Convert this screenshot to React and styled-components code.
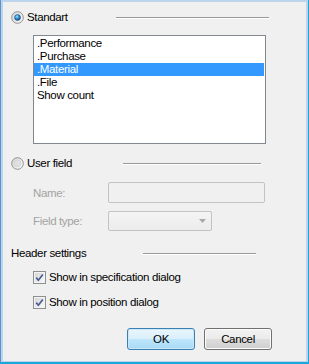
import styled, { createGlobalStyle } from "styled-components";

const Global = createGlobalStyle`
  html, body {
    margin: 0;
    padding: 0;
    background: #f0f0f0;
  }
  body {
    font-family: "Liberation Sans", Arial, sans-serif;
    font-size: 11.5px;
    letter-spacing: -0.35px;
    color: #000;
  }
`;

// Fensterrahmen
const Window = styled.div`
  width: 309px;
  height: 364px;
  box-sizing: border-box;
  display: flex;
  padding: 2px 2px 1px 2px;
  background: #bcd4ec;
  border-left: 1px solid #5a92cc;
  border-right: 1px solid #1aa7dc;
  border-bottom: 2px solid #1aa7dc;
`;

const Panel = styled.div`
  flex: 1;
  background: #f0f0f0;
  display: flex;
  flex-direction: column;
  padding-left: 8px;
`;

const Row = styled.div`
  display: flex;
  align-items: center;
  height: ${(p) => p.$h || 14}px;
  margin-top: ${(p) => p.$top}px;
  margin-left: ${(p) => p.$indent || 0}px;
`;

const Label = styled.span`
  margin-left: ${(p) => p.$gap || 0}px;
  color: ${(p) => (p.$disabled ? "#a3a3a3" : "#000")};
  white-space: nowrap;
`;

const Line = styled.div`
  margin-left: auto;
  margin-right: ${(p) => p.$right}px;
  width: ${(p) => p.$w}px;
  height: 1px;
  background: #999999;
  border-bottom: 1px solid #ffffff;
  margin-top: 2px;
`;

const ListBox = styled.div`
  margin-top: 11px;
  margin-left: 22px;
  width: 233px;
  height: 109px;
  box-sizing: border-box;
  border: 1px solid #828790;
  background: #fff;
  padding: 1px 1px 0 0;
`;

const Item = styled.div`
  height: 13px;
  line-height: 13px;
  padding-left: 3px;
  background: ${(p) => (p.$selected ? "#3399ff" : "transparent")};
  color: ${(p) => (p.$selected ? "#fff" : "#000")};
`;

const FieldLabel = styled.span`
  width: 75px;
  color: #a3a3a3;
`;

const Input = styled.div`
  width: ${(p) => p.$w}px;
  height: 100%;
  box-sizing: border-box;
  border: 1px solid #c3c3c3;
  border-radius: 2px;
  background: ${(p) => (p.$combo ? "linear-gradient(#f4f4f4, #ececec)" : "#f0f0f0")};
  display: flex;
  align-items: center;
  justify-content: flex-end;
  padding-right: 5px;
`;

const Heading = styled(Row)`
  margin-left: 0;
`;

const Buttons = styled.div`
  display: flex;
  justify-content: flex-end;
  gap: 9px;
  margin-top: 19px;
  margin-right: 34px;
`;

const Button = styled.button`
  width: 68px;
  height: 22px;
  box-sizing: border-box;
  font: inherit;
  letter-spacing: inherit;
  color: #000;
  border-radius: 3px;
  padding: 0;
  border: 1px solid ${(p) => (p.$primary ? "#3c7fb1" : "#707070")};
  background: ${(p) =>
    p.$primary
      ? "linear-gradient(#eaf6fd 0%, #d9f0fc 50%, #bee6fd 51%, #a7d9f5 100%)"
      : "linear-gradient(#f2f2f2 0%, #ebebeb 50%, #dddddd 51%, #cfcfcf 100%)"};
  box-shadow: inset 0 0 0 1px ${(p) => (p.$primary ? "#cbe8f9" : "#fcfcfc")};
`;

function Radio({ checked }) {
  return (
    <svg width="13" height="13" viewBox="0 0 13 13">
      <defs>
        <linearGradient id={checked ? "rOn" : "rOff"} x1="0" y1="0" x2="1" y2="1">
          <stop offset="0" stopColor="#d4d4d4" />
          <stop offset="1" stopColor="#ffffff" />
        </linearGradient>
        <radialGradient id="dot" cx="0.4" cy="0.35" r="0.7">
          <stop offset="0" stopColor="#8ee6ff" />
          <stop offset="0.5" stopColor="#2a8ad4" />
          <stop offset="1" stopColor="#1a3f7a" />
        </radialGradient>
      </defs>
      <circle cx="6.5" cy="6.5" r="5.8" fill={`url(#${checked ? "rOn" : "rOff"})`} stroke="#8e8f8f" strokeWidth="1" />
      {checked ? (
        <circle cx="6.5" cy="6.5" r="3" fill="url(#dot)" stroke="#26456f" strokeWidth="0.5" />
      ) : (
        <circle cx="6.5" cy="6.5" r="3.5" fill="#e0e0e0" stroke="#c8c8c8" strokeWidth="0.5" />
      )}
    </svg>
  );
}

function Check() {
  return (
    <svg width="13" height="13" viewBox="0 0 13 13">
      <defs>
        <linearGradient id="cb" x1="0" y1="0" x2="1" y2="1">
          <stop offset="0" stopColor="#d6d6d6" />
          <stop offset="1" stopColor="#f8f8f8" />
        </linearGradient>
      </defs>
      <rect x="0.5" y="0.5" width="12" height="12" fill="#f4f4f4" stroke="#8e8f8f" />
      <rect x="2" y="2" width="9" height="9" fill="url(#cb)" />
      <path d="M3.2 6.6 L5.4 9.2 L9.8 3.4" fill="none" stroke="#4a5f95" strokeWidth="1.7" />
    </svg>
  );
}

function Arrow() {
  return (
    <svg width="7" height="4" viewBox="0 0 7 4">
      <path d="M0 0 H7 L3.5 4 Z" fill="#a8a8a8" />
    </svg>
  );
}

export default function App() {
  const items = [".Performance", ".Purchase", ".Material", ".File", "Show count"];

  return (
    <>
      <Global />
      <Window>
        <Panel>
          <Row $top={8}>
            <Radio checked />
            <Label $gap={3}>Standart</Label>
            <Line $w={153} $right={37} />
          </Row>

          <ListBox>
            {items.map((name) => (
              <Item key={name} $selected={name === ".Material"}>
                {name}
              </Item>
            ))}
          </ListBox>

          <Row $top={12}>
            <Radio />
            <Label $gap={3}>User field</Label>
            <Line $w={138} $right={45} />
          </Row>

          <Row $top={12} $h={21} $indent={22}>
            <FieldLabel>Name:</FieldLabel>
            <Input $w={157} />
          </Row>

          <Row $top={8} $h={20} $indent={22}>
            <FieldLabel>Field type:</FieldLabel>
            <Input $w={104} $combo>
              <Arrow />
            </Input>
          </Row>

          <Heading $top={15}>
            <Label>Header settings</Label>
            <Line $w={113} $right={50} />
          </Heading>

          <Row $top={10} $indent={22}>
            <Check />
            <Label $gap={3}>Show in specification dialog</Label>
          </Row>

          <Row $top={11} $indent={22}>
            <Check />
            <Label $gap={3}>Show in position dialog</Label>
          </Row>

          <Buttons>
            <Button $primary>OK</Button>
            <Button>Cancel</Button>
          </Buttons>
        </Panel>
      </Window>
    </>
  );
}
